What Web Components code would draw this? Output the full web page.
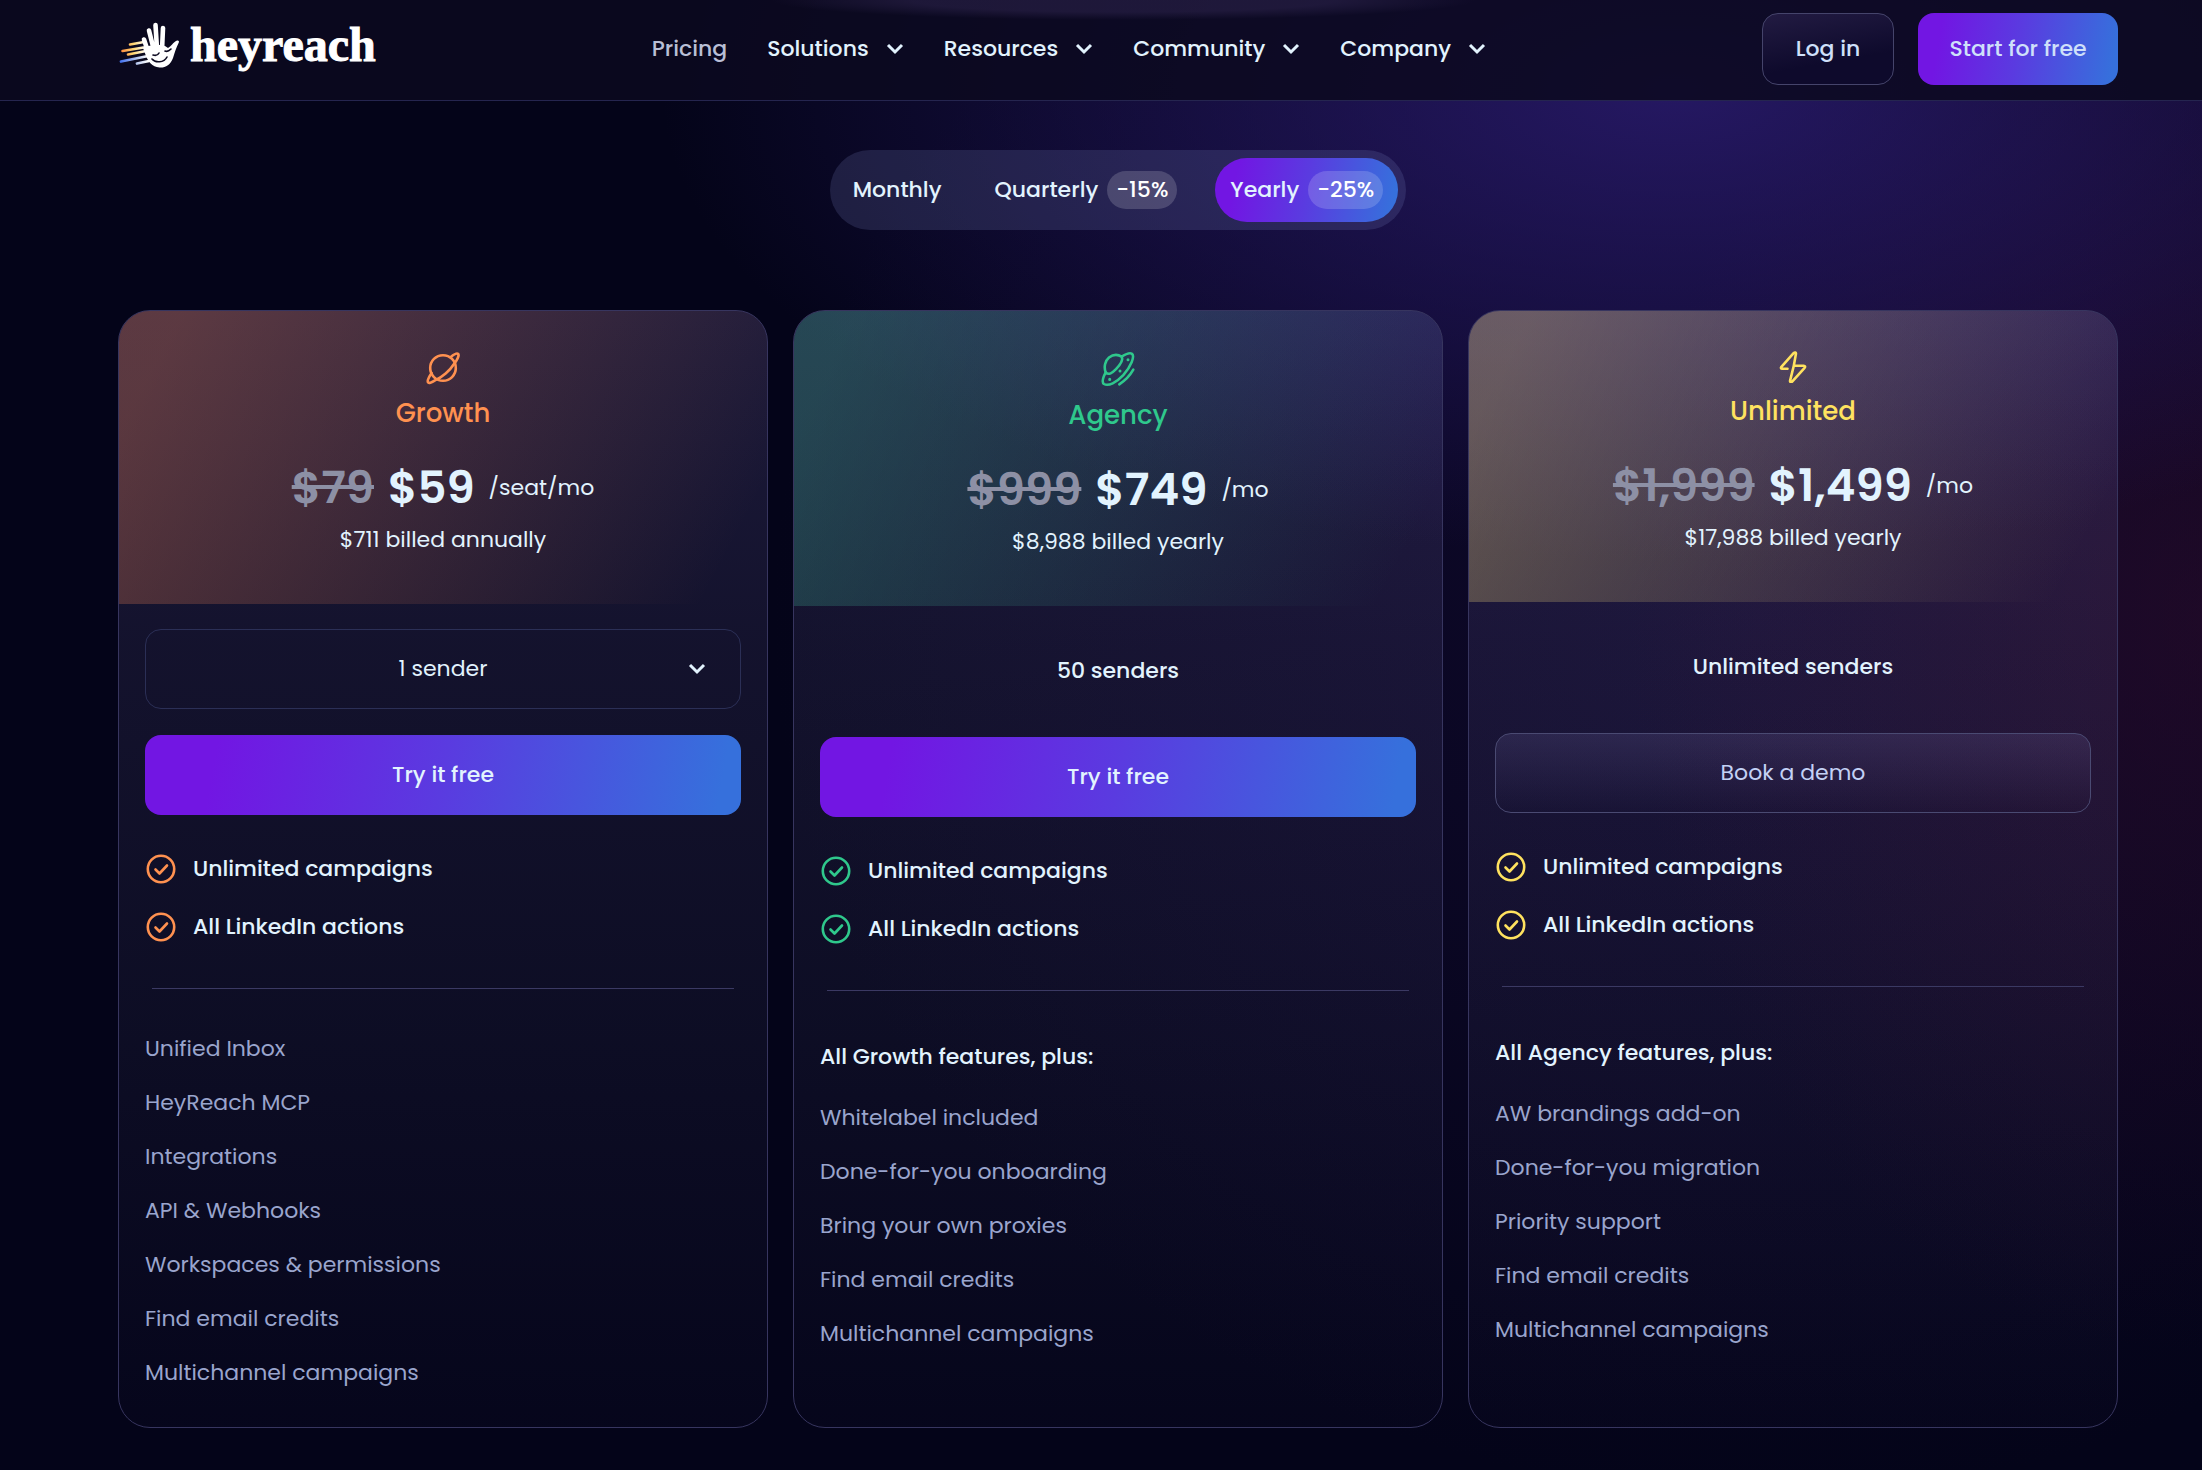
<!DOCTYPE html>
<html lang="en">
<head>
<meta charset="utf-8">
<title>HeyReach Pricing</title>
<style>
    :root {
        --ink: #e2f3fe;
        --muted: #9aa5cd;
        --line: #37355f;
        --cta: linear-gradient(100deg, #7216e3 12%, #5a3be0 50%, #3670dc 96%);
    }
    body {
        margin: 0;
        min-height: 100vh;
        color: var(--ink);
        font-family: Poppins, Inter, "Open Sans", sans-serif;
        font-size: 22px;
        line-height: 34px;
        background:
            radial-gradient(ellipse 46% 32% at 76% 6%, rgba(42, 27, 110, .85), rgba(42, 27, 110, 0) 100%),
            radial-gradient(ellipse 26% 50% at 100% 42%, rgba(50, 12, 44, .5), rgba(50, 12, 44, 0) 100%),
            radial-gradient(ellipse 45% 60% at 80% 42%, rgba(26, 14, 60, .5), rgba(26, 14, 60, 0) 100%),
            #040419;
    }
    main {
        display: grid;
        gap: 80px;
        padding: 49px 84px 40px 118px;
    }
    .plans {
        display: grid;
        grid-template-columns: repeat(3, 1fr);
        gap: 25px;
    }
</style>
</head>
<body>
<site-header></site-header>
<main>
    <billing-toggle></billing-toggle>
    <div class="plans">
        <plan-card name="Growth" icon="planet" tone="#ff9150" tint="rgba(240, 130, 85, .3)" was="$79" price="$59" per="/seat/mo" billed="$711 billed annually" select="1 sender" cta="Try it free" kind="primary">
            <li>Unified Inbox</li>
            <li>HeyReach MCP</li>
            <li>Integrations</li>
            <li>API &amp; Webhooks</li>
            <li>Workspaces &amp; permissions</li>
            <li>Find email credits</li>
            <li>Multichannel campaigns</li>
        </plan-card>
        <plan-card name="Agency" icon="orbit" tone="#2fc88c" tint="rgba(60, 165, 140, .32)" was="$999" price="$749" per="/mo" billed="$8,988 billed yearly" senders="50 senders" cta="Try it free" kind="primary" plus="All Growth features, plus:">
            <li>Whitelabel included</li>
            <li>Done-for-you onboarding</li>
            <li>Bring your own proxies</li>
            <li>Find email credits</li>
            <li>Multichannel campaigns</li>
        </plan-card>
        <plan-card name="Unlimited" icon="bolt" tone="#ffe25f" tint="rgba(225, 200, 120, .34)" was="$1,999" price="$1,499" per="/mo" billed="$17,988 billed yearly" senders="Unlimited senders" cta="Book a demo" kind="ghost" plus="All Agency features, plus:">
            <li>AW brandings add-on</li>
            <li>Done-for-you migration</li>
            <li>Priority support</li>
            <li>Find email credits</li>
            <li>Multichannel campaigns</li>
        </plan-card>
    </div>
</main>
<script>
const CHEVRON = `<svg class="chevron" width="18" height="12" viewBox="0 0 18 12" fill="none" stroke="currentColor" stroke-width="3" aria-hidden="true"><path d="M2 2l7 7 7-7"/></svg>`;

const ICONS = {
    planet: `<svg width="34" height="34" viewBox="0 0 34 34" fill="none" stroke="currentColor" stroke-width="2.6" stroke-linecap="round" stroke-linejoin="round"><circle cx="17" cy="17" r="12.8"/><path d="M24.800 6C28 3.400 30.800 2 32 2.800c1.400 1.200-.4 5.600-4 10.200C24 19.500 16 26.500 9 29.400 5.500 31.800 2.600 32.400 2 31.400c-.8-1.400.6-5 3.600-9.400"/></svg>`,
    orbit: `<svg width="36" height="36" viewBox="0 0 36 36" fill="none" stroke="currentColor" stroke-width="2.6" stroke-linecap="round" stroke-linejoin="round"><path d="M5.700 21.300C3.600 16 5 10 9 6.600 12.800 3.600 17.600 3.200 21.700 5.700 25 3.600 29.500 1.600 31.700 2.700 35.500 5 30.500 16 23.300 24.200 16.500 31.500 8.300 35.600 4 33 1.800 31.500 3 26.500 5.700 21.300"/><path d="M5.700 21.300C8.500 24.600 12.500 21.800 16 18.200 20 14 23.500 9 21.700 5.700M33.300 18.700C30 24.500 25.500 29.400 19.300 33.300"/><path d="M28 8.700v.1M20 20v.1M9.700 28.300v.1" stroke-width="3"/></svg>`,
    bolt: `<svg width="32" height="32" viewBox="0 0 32 32" fill="none" stroke="currentColor" stroke-width="2.6" stroke-linecap="round" stroke-linejoin="round"><path d="M10.500 17.800H5.200C3.800 17.800 3.600 16.800 4.400 15.800L16.600 2.200C17.800 1 19.200 1.400 18.900 3L16.800 14.800H26.800C28.200 14.800 28.400 15.800 27.600 16.800L15.400 30.400C14.200 31.600 12.800 31.200 13.100 29.600L16.800 14.800"/></svg>`
};

const CHECK = `<svg width="32" height="32" viewBox="0 0 32 32" fill="none" stroke="currentColor" stroke-width="2.6" stroke-linecap="round" stroke-linejoin="round" aria-hidden="true"><circle cx="16" cy="16" r="13.2"/><path d="M10.500 16.500l4 4 7.500-8"/></svg>`;

class SiteHeader extends HTMLElement {
    constructor() {
        super();
        this.attachShadow({ mode: 'open' });
    }

    connectedCallback() {
        this.render();
    }

    render() {
        const menus = ['Solutions', 'Resources', 'Community', 'Company'];
        this.shadowRoot.innerHTML = `
        <style>
            :host {
                display: flex;
                align-items: center;
                justify-content: space-between;
                height: 98px;
                padding: 0 84px 2px 118px;
                border-bottom: 1px solid #25254f;
                background:
                    radial-gradient(ellipse 16% 20px at 51% 0, rgba(48, 38, 80, .5) 60%, rgba(48, 38, 80, 0)),
                    rgba(12, 9, 32, .86);
            }
            .logo {
                display: flex;
                align-items: center;
                gap: 8px;
                padding-bottom: 8px;
                color: #fff;
                text-decoration: none;
                font: bold 48px/56px "Liberation Serif", serif;
                -webkit-text-stroke: 1px #fff;
            }
            nav {
                display: flex;
                align-items: center;
                gap: 40px;
            }
            nav a, nav button {
                display: flex;
                align-items: center;
                gap: 17px;
                padding: 0;
                border: 0;
                background: none;
                color: var(--ink);
                font: inherit;
                font-weight: 500;
                text-decoration: none;
            }
            nav a {
                color: #b9bfd6;
            }
            .actions {
                display: flex;
                gap: 24px;
            }
            .actions a {
                box-sizing: border-box;
                display: grid;
                place-items: center;
                height: 72px;
                border-radius: 16px;
                color: #cfe0fa;
                font-weight: 500;
                text-decoration: none;
            }
            .login {
                width: 132px;
                border: 1px solid #45446b;
                background: linear-gradient(170deg, #221b42, #0e0a2c 65%);
            }
            .start {
                width: 200px;
                background: var(--cta);
            }
        </style>
        <a class="logo" href="#">
            <svg width="64" height="48" viewBox="0 0 64 48" fill="none" stroke-linecap="round" aria-hidden="true">
                <defs>
                    <linearGradient id="warm" gradientUnits="userSpaceOnUse" x1="3" y1="0" x2="28" y2="0"><stop stop-color="#ff8a3c"/><stop offset=".5" stop-color="#ffd773"/><stop offset="1" stop-color="#fff"/></linearGradient>
                    <linearGradient id="cool" gradientUnits="userSpaceOnUse" x1="2" y1="0" x2="30" y2="0"><stop stop-color="#3f6ff0"/><stop offset=".6" stop-color="#b6c6ee"/><stop offset="1" stop-color="#fff"/></linearGradient>
                </defs>
                <path d="M12 23.500l14-2.500M4.500 30l24-4M10 33.500l18-3.500" stroke="url(#warm)" stroke-width="2.6"/>
                <path d="M3 40.500l27-5.500M19 42.500l12-2.500" stroke="url(#cool)" stroke-width="2.8"/>
                <g stroke="#fff" stroke-width="4.6">
                    <path d="M26 18.500l5 15M31 9.500l5 20M37.500 4l1.500 24M45 7l-1 22"/>
                </g>
                <path d="M25 27C29 24 35 25 39 23.500l8 1.500 3 2c3-1.500 5-5.500 9-7.500 1.500-.4 2.400.6 1.800 2C58 27 57 31 55 37c-2.500 7-8 10-13.500 9.500C34 46 30 40 28 35z" fill="#fff"/>
                <path d="M34 38c3 4 12 4 15-2M35 34c3 1 5 0 6-2M47 30c2 1 4 0 6-2" stroke="#0c0920" stroke-width="1.6"/>
            </svg>
            heyreach
        </a>
        <nav aria-label="Main">
            <a href="#">Pricing</a>
            ${menus.map(m => `<button type="button">${m}${CHEVRON}</button>`).join('')}
        </nav>
        <div class="actions">
            <a class="login" href="#">Log in</a>
            <a class="start" href="#">Start for free</a>
        </div>
        `;
    }
}

class BillingToggle extends HTMLElement {
    constructor() {
        super();
        this.attachShadow({ mode: 'open' });
    }

    connectedCallback() {
        this.shadowRoot.innerHTML = `
        <style>
            :host {
                display: flex;
                justify-content: center;
            }
            .track {
                display: flex;
                gap: 23px;
                padding: 8px;
                border-radius: 40px;
                background: rgba(120, 130, 190, .2);
            }
            button {
                display: flex;
                align-items: center;
                gap: 9px;
                height: 64px;
                padding: 0 15px;
                border: 0;
                border-radius: 32px;
                background: none;
                color: var(--ink);
                font: inherit;
                font-weight: 500;
            }
            button[aria-pressed="true"] {
                background: var(--cta);
            }
            .badge {
                padding: 2px 9px;
                border-radius: 19px;
                background: rgba(255, 255, 255, .17);
                color: #fff;
            }
        </style>
        <div class="track" role="group" aria-label="Billing period">
            <button type="button" aria-pressed="false">Monthly</button>
            <button type="button" aria-pressed="false">Quarterly<span class="badge">-15%</span></button>
            <button type="button" aria-pressed="true">Yearly<span class="badge">-25%</span></button>
        </div>
        `;
    }
}

class PlanCard extends HTMLElement {
    constructor() {
        super();
        this.attachShadow({ mode: 'open' });
    }

    connectedCallback() {
        this.render();
    }

    senders() {
        if (this.hasAttribute('select')) {
            return `<label class="select"><select aria-label="Senders"><option>${this.getAttribute('select')}</option></select>${CHEVRON}</label>`;
        }
        return `<p class="senders">${this.getAttribute('senders')}</p>`;
    }

    render() {
        const get = name => this.getAttribute(name);
        const plus = this.hasAttribute('plus') ? `<h3>${get('plus')}</h3>` : '';
        this.shadowRoot.innerHTML = `
        <style>
            :host {
                box-sizing: border-box;
                display: block;
                overflow: hidden;
                border: 1px solid var(--line);
                border-radius: 32px;
                background: linear-gradient(180deg, rgba(125, 115, 190, .2), rgba(125, 115, 180, .13) 30%, rgba(120, 120, 170, .08) 65%, rgba(100, 90, 160, .02));
            }
            p, h2, h3, ul {
                margin: 0;
                padding: 0;
            }
            header {
                display: flex;
                flex-direction: column;
                align-items: center;
                padding: 40px 0 47px;
                background: linear-gradient(118deg, ${get('tint')} 8%, transparent 92%);
            }
            header svg {
                margin-bottom: 8px;
                color: ${get('tone')};
            }
            h2 {
                color: ${get('tone')};
                font-size: 26px;
                line-height: 40px;
                font-weight: 500;
            }
            .price {
                display: flex;
                align-items: center;
                gap: 14px;
                margin: 25px 0 5px;
                line-height: 60px;
            }
            .price s, .price strong {
                font-size: 45px;
                font-weight: 600;
            }
            .price s {
                color: #8d90a5;
            }
            .body {
                padding: 25px 26px 37px;
            }
            .senders, .select {
                box-sizing: border-box;
                height: 80px;
                margin-bottom: 26px;
            }
            .senders {
                display: grid;
                place-items: center;
                font-weight: 500;
            }
            .select {
                display: grid;
                align-items: center;
            }
            .select > * {
                grid-area: 1 / 1;
            }
            select {
                appearance: none;
                width: 100%;
                height: 80px;
                border: 1px solid #2b2f56;
                border-radius: 16px;
                background: none;
                color: var(--ink);
                font: inherit;
                text-align: center;
                text-align-last: center;
            }
            .chevron {
                justify-self: end;
                margin-right: 35px;
            }
            .cta {
                box-sizing: border-box;
                display: block;
                width: 100%;
                height: 80px;
                border: 0;
                border-radius: 16px;
                font: inherit;
                font-weight: 500;
            }
            .primary {
                background: var(--cta);
                color: var(--ink);
            }
            .ghost {
                border: 1px solid #4a4a72;
                background: linear-gradient(180deg, rgba(150, 140, 210, .15), rgba(150, 140, 210, 0));
                color: #c3d1f5;
                font-weight: 400;
            }
            .checks {
                display: grid;
                gap: 24px;
                padding-top: 37px;
                list-style: none;
                font-weight: 500;
            }
            .checks li {
                display: flex;
                align-items: center;
                gap: 16px;
            }
            .checks svg {
                color: ${get('tone')};
            }
            hr {
                height: 1px;
                margin: 44px 7px 43px;
                border: 0;
                background: #3b3963;
            }
            h3 {
                padding: 6px 0 27px;
                font-size: 22px;
                font-weight: 500;
            }
            .features {
                display: grid;
                gap: 20px;
                color: var(--muted);
                list-style: none;
            }
        </style>
        <header>
            ${ICONS[get('icon')]}
            <h2>${get('name')}</h2>
            <p class="price"><s>${get('was')}</s><strong>${get('price')}</strong><span>${get('per')}</span></p>
            <p>${get('billed')}</p>
        </header>
        <div class="body">
            ${this.senders()}
            <button type="button" class="cta ${get('kind')}">${get('cta')}</button>
            <ul class="checks">
                <li>${CHECK}Unlimited campaigns</li>
                <li>${CHECK}All LinkedIn actions</li>
            </ul>
            <hr>
            ${plus}
            <ul class="features"><slot></slot></ul>
        </div>
        `;
    }
}

customElements.define('site-header', SiteHeader);
customElements.define('billing-toggle', BillingToggle);
customElements.define('plan-card', PlanCard);
</script>
</body>
</html>
